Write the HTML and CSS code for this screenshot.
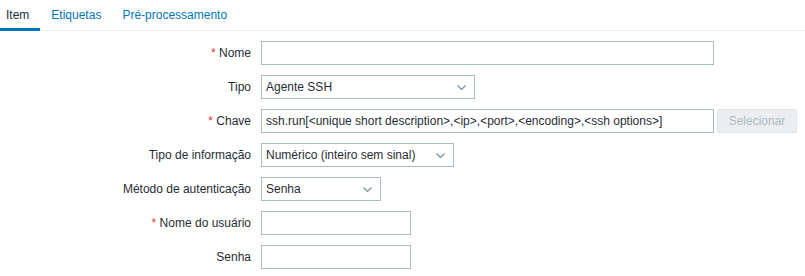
FILE: index.html
```html
<!DOCTYPE html>
<html lang="pt">
<head>
<meta charset="utf-8">
<title>Item</title>
<link rel="stylesheet" href="styles.css">
</head>
<body>
<nav class="tabs">
  <a class="tab active">Item</a>
  <a class="tab">Etiquetas</a>
  <a class="tab">Pré-processamento</a>
</nav>
<form class="form">
  <label class="label"><span class="req">*</span> Nome</label>
  <div class="field"><input class="input w-453" type="text"></div>

  <label class="label">Tipo</label>
  <div class="field"><div class="select w-214"><span>Agente SSH</span><svg class="chev" width="9" height="5" viewBox="0 0 9 5"><path d="M0.5 0.5 L4.5 4.5 L8.5 0.5" fill="none" stroke="#768d99" stroke-width="1.1"/></svg></div></div>

  <label class="label"><span class="req">*</span> Chave</label>
  <div class="field"><input class="input w-453" type="text" value="ssh.run[&lt;unique short description&gt;,&lt;ip&gt;,&lt;port&gt;,&lt;encoding&gt;,&lt;ssh options&gt;]"><button class="btn" type="button" disabled>Selecionar</button></div>

  <label class="label">Tipo de informação</label>
  <div class="field"><div class="select w-193"><span>Numérico (inteiro sem sinal)</span><svg class="chev" width="9" height="5" viewBox="0 0 9 5"><path d="M0.5 0.5 L4.5 4.5 L8.5 0.5" fill="none" stroke="#768d99" stroke-width="1.1"/></svg></div></div>

  <label class="label">Método de autenticação</label>
  <div class="field"><div class="select w-120"><span>Senha</span><svg class="chev" width="9" height="5" viewBox="0 0 9 5"><path d="M0.5 0.5 L4.5 4.5 L8.5 0.5" fill="none" stroke="#768d99" stroke-width="1.1"/></svg></div></div>

  <label class="label"><span class="req">*</span> Nome do usuário</label>
  <div class="field"><input class="input w-150" type="text"></div>

  <label class="label">Senha</label>
  <div class="field"><input class="input w-150" type="password"></div>
</form>
</body>
</html>
```
FILE: styles.css
```css
* { box-sizing: border-box; }
html, body {
  margin: 0;
  padding: 0;
  background: #ffffff;
  font-family: "Liberation Sans", Arial, sans-serif;
  font-size: 12px;
  color: #1f2c33;
  overflow: hidden;
}
.tabs {
  display: flex;
  margin-left: -5px;
  height: 31px;
  border-bottom: 1px solid #ebeef0;
}
.tab {
  display: block;
  padding: 2px 10px 0 11px;
  height: 31px;
  line-height: 26px;
  color: #0275b8;
  cursor: pointer;
  margin-bottom: -1px;
  border-bottom: 3px solid transparent;
}
.tab.active {
  color: #1f2c33;
  border-bottom-color: #0275b8;
  padding-right: 11px;
}
.form {
  display: grid;
  grid-template-columns: 251px auto;
  column-gap: 10px;
  row-gap: 10px;
  margin-top: 10px;
}
.label {
  text-align: right;
  align-self: center;
  line-height: 24px;
}
.req {
  color: #e33734;
}
.field {
  display: flex;
  align-items: center;
  gap: 3px;
}
.input, .select {
  height: 24px;
  border: 1px solid #acbbc2;
  background: #ffffff;
  font-family: "Liberation Sans", Arial, sans-serif;
  font-size: 12px;
  color: #1f2c33;
  padding: 0 4px;
  margin: 0;
  outline: none;
}
.select {
  display: flex;
  align-items: center;
  justify-content: space-between;
  padding-right: 8px;
}
.chev { display: block; }
.w-453 { width: 453px; }
.w-214 { width: 214px; }
.w-193 { width: 193px; }
.w-120 { width: 120px; }
.w-150 { width: 150px; }
.btn {
  height: 24px;
  width: 80px;
  padding: 0;
  border: 1px solid #dfe4e7;
  border-radius: 2px;
  background: #ebeef0;
  color: #acbbc2;
  font-family: "Liberation Sans", Arial, sans-serif;
  font-size: 12px;
}
```
